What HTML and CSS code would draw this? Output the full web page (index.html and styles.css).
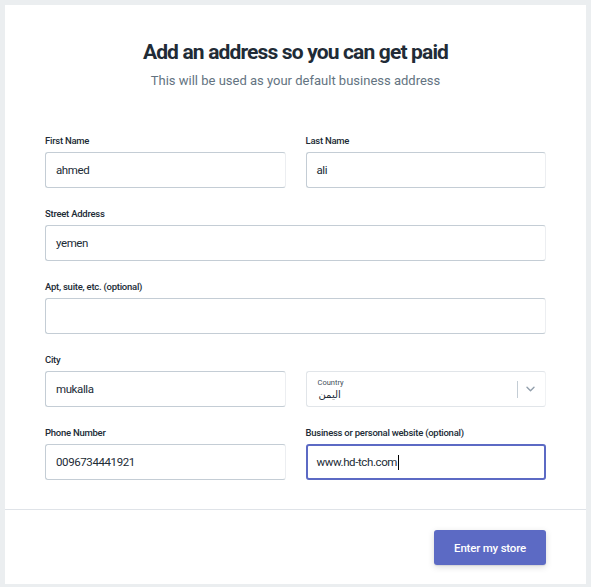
FILE: index.html
```html
<!DOCTYPE html>
<html lang="en">
<head>
<meta charset="utf-8">
<title>Add an address</title>
<link rel="stylesheet" href="styles.css">
</head>
<body>
<main class="card">
  <header class="head">
    <h1 class="title">Add an address so you can get paid</h1>
    <p class="subtitle">This will be used as your default business address</p>
  </header>
  <form class="form">
    <div class="field">
      <label class="label">First Name</label>
      <div class="input"><span class="value">ahmed</span></div>
    </div>
    <div class="field">
      <label class="label">Last Name</label>
      <div class="input"><span class="value">ali</span></div>
    </div>
    <div class="field full">
      <label class="label">Street Address</label>
      <div class="input"><span class="value">yemen</span></div>
    </div>
    <div class="field full">
      <label class="label">Apt, suite, etc. (optional)</label>
      <div class="input"><span class="value"></span></div>
    </div>
    <div class="field">
      <label class="label">City</label>
      <div class="input"><span class="value">mukalla</span></div>
    </div>
    <div class="field select-field">
      <div class="select">
        <div class="select-text">
          <span class="select-label">Country</span>
          <span class="select-value" dir="rtl">اليمن</span>
        </div>
        <span class="select-sep"></span>
        <svg class="chevron" width="9" height="6" viewBox="0 0 9 6"><path d="M1 1.2l3.5 3.5 3.5-3.5" fill="none" stroke="#919eab" stroke-width="1.4" stroke-linecap="round" stroke-linejoin="round"/></svg>
      </div>
    </div>
    <div class="field">
      <label class="label">Phone Number</label>
      <div class="input"><span class="value">0096734441921</span></div>
    </div>
    <div class="field">
      <label class="label">Business or personal website (optional)</label>
      <div class="input focused"><span class="value">www.hd-tch.com</span><span class="caret"></span></div>
    </div>
  </form>
  <footer class="foot">
    <button class="btn" type="button">Enter my store</button>
  </footer>
</main>
</body>
</html>
```
FILE: styles.css
```css
* { box-sizing: border-box; }
html, body { margin: 0; }
body {
  background: #ebeef0;
  padding: 5px 5px 3px 5px;
  font-family: Roboto, "Noto Sans", "DejaVu Sans", sans-serif;
  color: #212b36;
}
.card {
  width: 581px;
  height: 579px;
  background: #fff;
  display: flex;
  flex-direction: column;
}
.head {
  padding-top: 33px;
  text-align: center;
}
.title {
  margin: 0;
  font-size: 21px;
  line-height: 28px;
  font-weight: 700;
  letter-spacing: -0.85px;
  color: #212b36;
}
.subtitle {
  margin: 6px 0 0;
  font-size: 13px;
  line-height: 18px;
  color: #637381;
}
.form {
  margin-top: 44px;
  padding: 0 40px 29px 40px;
  display: grid;
  grid-template-columns: 1fr 1fr;
  column-gap: 20px;
  row-gap: 19px;
  border-bottom: 1px solid #dfe3e8;
}
.field { display: flex; flex-direction: column; }
.full { grid-column: 1 / 3; }
.label {
  font-size: 9.5px;
  line-height: 14px;
  font-weight: 500;
  color: #212b36;
  margin-bottom: 4px;
  letter-spacing: -0.25px;
}
.input {
  height: 36px;
  border: 1px solid #c4cdd5;
  border-right-color: #eceef1;
  border-radius: 3px;
  display: flex;
  align-items: center;
  padding: 0 10px;
  font-size: 11.5px;
  letter-spacing: -0.4px;
  color: #212b36;
}
.input.focused {
  border: 2px solid #5c6ac4;
  padding: 0 9px;
}
.caret {
  display: inline-block;
  width: 1px;
  height: 15px;
  background: #000;
  margin-left: 1px;
}
.select-field { justify-content: flex-end; }
.select {
  height: 36px;
  border: 1px solid #e1e5e9;
  border-right-color: #f0f2f4;
  border-radius: 3px;
  display: flex;
  align-items: center;
  padding: 0 10px 0 11px;
}
.select-text {
  flex: 1;
  display: flex;
  flex-direction: column;
  align-items: flex-start;
}
.select-label {
  font-size: 7.5px;
  line-height: 10px;
  color: #454f5b;
  margin-top: 1px;
}
.select-value {
  font-size: 10px;
  line-height: 13px;
  color: #212b36;
  margin-left: 1px;
}
.select-sep {
  width: 1px;
  height: 17px;
  background: #c4cdd5;
  margin-right: 8px;
}
.chevron { display: block; }
.foot {
  display: flex;
  justify-content: flex-end;
  padding: 20px 40px 0 0;
}
.btn {
  width: 112px;
  height: 35px;
  border: 0;
  border-radius: 3px;
  background: #5c6ac4;
  color: #fff;
  font-family: Roboto, "Noto Sans", sans-serif;
  font-size: 11.5px;
  font-weight: 500;
  letter-spacing: -0.2px;
  box-shadow: 0 2px 6px rgba(63, 63, 68, 0.18), 0 1px 1px rgba(63,63,68,0.1);
}
```
